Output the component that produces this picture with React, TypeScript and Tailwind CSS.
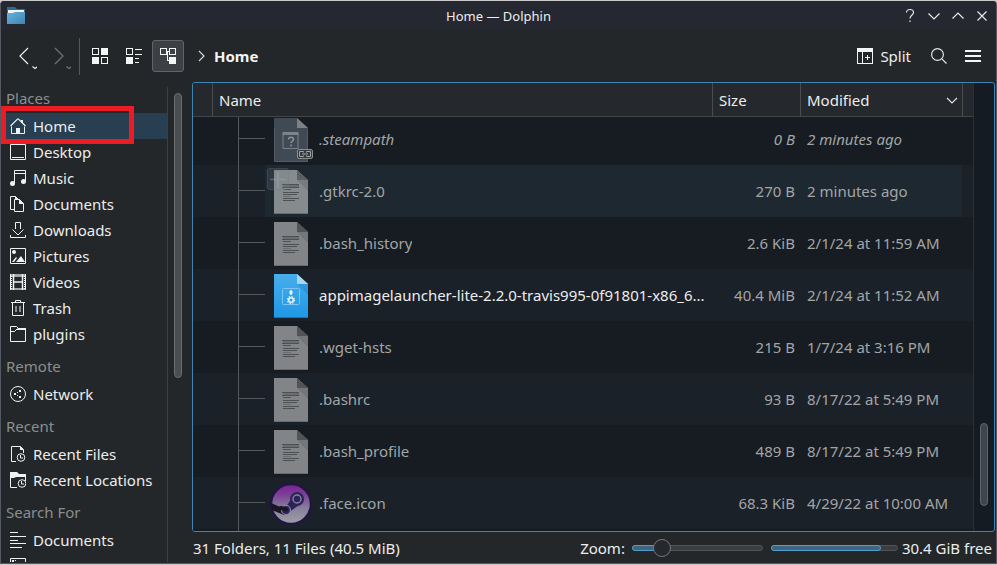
import React from "react";

type IconProps = { children: React.ReactNode };

const PlaceIcon = ({ children }: IconProps) => (
  <svg
    width="16"
    height="16"
    viewBox="0 0 16 16"
    fill="none"
    stroke="#f0f1f2"
    strokeWidth="1"
    className="shrink-0"
    aria-hidden="true"
  >
    {children}
  </svg>
);

const icons: Record<string, React.ReactNode> = {
  home: (
    <>
      <path d="M1.5 8.5v7h13v-7" />
      <path d="M0.5 8L7.5 1h1L15.5 8" strokeWidth="1.2" />
      <path d="M11 2h2v4l-2-2zM6 10h4v6H6z" fill="#f0f1f2" stroke="none" />
    </>
  ),
  desktop: (
    <>
      <path d="M0.5 0.5h15v15H0.5z" />
      <path d="M2 13.5h12" />
    </>
  ),
  music: (
    <>
      <path d="M4.5 13V0.5h11V11M5 3.5h10" />
      <circle cx="2.5" cy="13.5" r="2.5" fill="#f0f1f2" stroke="none" />
      <circle cx="13.5" cy="11.5" r="2.5" fill="#f0f1f2" stroke="none" />
    </>
  ),
  documents: (
    <>
      <path d="M4 13.5H0.5V0.5h5l3 3" />
      <path d="M4.5 3.5h5l4 4v8h-9z" />
      <path d="M9 3l5 5H9z" fill="#f0f1f2" stroke="none" />
      <path d="M5 0l4 3.5H5z" fill="#f0f1f2" stroke="none" />
    </>
  ),
  downloads: (
    <>
      <path d="M5.5 7V0.5h5V7" />
      <path d="M2.5 7.5L8 13l5.5-5.5" />
      <path d="M0.5 13v2.5h15V13" />
    </>
  ),
  pictures: (
    <>
      <path d="M0.5 0.5h15v15H0.5z" />
      <circle cx="4" cy="4" r="2" fill="#f0f1f2" stroke="none" />
      <path d="M2 14l4-5 1 1-3 4zM6 14l5-6 4 6z" fill="#f0f1f2" stroke="none" />
    </>
  ),
  videos: (
    <>
      <path d="M0 0h16v3H0zM0 14h16v2H0z" fill="#a5a7a9" stroke="none" />
      <path d="M3.5 0v16M12.5 0v16M3 8h10" strokeWidth="1.5" />
      <path d="M0.5 0v16M15.5 0v16" />
      <path d="M1.5 2v13M14.5 2v13" strokeDasharray="1 1" />
    </>
  ),
  trash: (
    <>
      <path d="M1 2.5h14M5.5 2V0.5h5V2M2.5 3v12.500h11V3" />
      <path d="M6 6v6M10 6v6" />
    </>
  ),
  folder: (
    <>
      <path d="M0.5 0.5h6l2 2h7v13H0.5zM0.5 5.5h4L7 3" />
      <path d="M8 2h8v2H6z" fill="#f0f1f2" stroke="none" />
    </>
  ),
  network: (
    <>
      <circle cx="8" cy="8" r="7.5" />
      <path d="M4 7h2v2H4zM9 4h2v2H9zM9 10h2v2H9zM7 6h1v1H7zM7 9h1v1H7z" fill="#f0f1f2" stroke="none" />
    </>
  ),
  recentFiles: (
    <>
      <path d="M6 15.5H1.5V0.5h9l3 3V7" />
      <path d="M10 0l4 4h-4z" fill="#f0f1f2" stroke="none" />
      <circle cx="11" cy="11.5" r="3.8" />
      <path d="M10.5 9v3H13" />
    </>
  ),
  recentLocations: (
    <>
      <path d="M0.5 3v12.500H7M15.5 4v5" />
      <path d="M0 0h7l2 2h7v3H6L4 6H0z" fill="#f0f1f2" stroke="none" />
      <circle cx="12" cy="11.5" r="3.8" />
      <path d="M11.5 9v3H14" />
    </>
  ),
  text: <path d="M0 0.5h8M0 4.5h16M0 8.5h8M0 11.5h16M0 15.5h12" />,
  images: (
    <>
      <path d="M0.5 0.5h15v15H0.5z" />
      <path d="M2 2h2v2H2zM5 2h1v1H5z" fill="#f0f1f2" stroke="none" />
    </>
  ),
};

type Place = { label: string; icon: string; active?: boolean; iconOnly?: boolean };

const sections: { title: string; items: Place[] }[] = [
  {
    title: "Places",
    items: [
      { label: "Home", icon: "home", active: true },
      { label: "Desktop", icon: "desktop" },
      { label: "Music", icon: "music" },
      { label: "Documents", icon: "documents" },
      { label: "Downloads", icon: "downloads" },
      { label: "Pictures", icon: "pictures" },
      { label: "Videos", icon: "videos" },
      { label: "Trash", icon: "trash" },
      { label: "plugins", icon: "folder" },
    ],
  },
  { title: "Remote", items: [{ label: "Network", icon: "network" }] },
  {
    title: "Recent",
    items: [
      { label: "Recent Files", icon: "recentFiles" },
      { label: "Recent Locations", icon: "recentLocations" },
    ],
  },
  {
    title: "Search For",
    items: [
      { label: "Documents", icon: "text" },
      { label: "Images", icon: "images", iconOnly: true },
    ],
  },
];

type Kind = "unknown" | "text" | "app" | "steam";
type FileRow = {
  name: string;
  size: string;
  modified: string;
  kind: Kind;
  hover?: boolean;
  link?: boolean;
  bright?: boolean;
};

const files: FileRow[] = [
  { name: ".steampath", size: "0 B", modified: "2 minutes ago", kind: "unknown", link: true },
  { name: ".gtkrc-2.0", size: "270 B", modified: "2 minutes ago", kind: "text", hover: true },
  { name: ".bash_history", size: "2.6 KiB", modified: "2/1/24 at 11:59 AM", kind: "text" },
  {
    name: "appimagelauncher-lite-2.2.0-travis995-0f91801-x86_6...",
    size: "40.4 MiB",
    modified: "2/1/24 at 11:52 AM",
    kind: "app",
    bright: true,
  },
  { name: ".wget-hsts", size: "215 B", modified: "1/7/24 at 3:16 PM", kind: "text" },
  { name: ".bashrc", size: "93 B", modified: "8/17/22 at 5:49 PM", kind: "text" },
  { name: ".bash_profile", size: "489 B", modified: "8/17/22 at 5:49 PM", kind: "text" },
  { name: ".face.icon", size: "68.3 KiB", modified: "4/29/22 at 10:00 AM", kind: "steam" },
];

function FileIcon({ kind, hover }: { kind: Kind; hover?: boolean }) {
  return (
    <svg width="48" height="44" viewBox="0 0 48 44" className="shrink-0 overflow-visible" aria-hidden="true">
      <defs>
        <linearGradient id="appFill" x1="0" y1="0" x2="0" y2="1">
          <stop offset="0" stopColor="#48aeec" />
          <stop offset="1" stopColor="#1e98e6" />
        </linearGradient>
        <linearGradient id="steamFill" x1="0" y1="0" x2="0" y2="1">
          <stop offset="0" stopColor="#7a2290" />
          <stop offset="0.25" stopColor="#7c3c98" />
          <stop offset="0.6" stopColor="#86809a" />
          <stop offset="1" stopColor="#a0a0a6" />
        </linearGradient>
      </defs>
      {kind === "text" && (
        <>
          <path d="M7 0h23l11 10v34H7z" fill={hover ? "#868b8e" : "#828488"} />
          <path d="M30 10h11v11z" fill="#000" opacity="0.1" />
          <path d="M30 0l11 10H30z" fill={hover ? "#596167" : "#515457"} />
          <path d="M7 43.5h34" stroke="#696b6e" />
          <path d="M16 14h16v3H16z" fill="#6b6e71" />
          <path
            d="M15 14.5h17M15 17.5h17M16 19.5h8M16 22.5h16M16 24.5h14M16 28.5h16M16 30.5h12"
            stroke="#4e5154"
          />
          <path d="M16 26.5h8" stroke="#6b6e71" />
          {hover && (
            <>
              <rect x="0.5" y="-1.5" width="21" height="21" rx="2" fill="#7b858c" fillOpacity="0.18" stroke="#737c83" strokeOpacity="0.3" />
              <path d="M3 9.5h16M11 2v16" stroke="#a8aeb2" strokeWidth="2" opacity="0.3" />
            </>
          )}
        </>
      )}
      {kind === "unknown" && (
        <>
          <path d="M7 0h23l11 10v34H7z" fill="#404a55" />
          <path d="M30 0l11 10H30z" fill="#7c8187" />
          <path d="M7.5 10v33.500h33V11" fill="none" stroke="#525b64" />
          <path d="M16 15.5h15v15H16z" fill="none" stroke="#79818a" />
          <path d="M15.5 14h16v3h-16z" fill="#7b838b" />
          <path
            d="M21.5 21.5c0-3 5-3 5 0 0 1.800-2.500 1.800-2.500 3.500M24 26.5v2"
            fill="none"
            stroke="#8a9097"
            strokeWidth="1.5"
          />
          <rect x="30.5" y="31.5" width="15" height="9" rx="1.5" fill="#343b40" stroke="#8b8f92" />
          <path d="M36.5 34.5v-1h-4v5h4v-1M39.5 34.5v-1h4v5h-4v-1M35 36h6" fill="none" stroke="#a2a5a7" />
        </>
      )}
      {kind === "app" && (
        <>
          <path d="M7 0h23l11 10v34H7z" fill="url(#appFill)" />
          <path d="M30 10h11v11z" fill="#1b78b8" opacity="0.35" />
          <path d="M30 0l11 10H30z" fill="#a5d8f7" />
          <path d="M7 43.5h34" stroke="#1a73ab" />
          <rect x="15.5" y="14.5" width="17" height="16" rx="1" fill="none" stroke="#7cc5f2" />
          <path d="M22.5 17.5l1.500-2 1.500 2v2l-1.500 2-1.500-2z" fill="#e8f5fd" />
          <circle cx="24" cy="26" r="2.3" fill="none" stroke="#e8f5fd" strokeWidth="1.5" />
          <circle cx="24" cy="26" r="3.5" fill="none" stroke="#e8f5fd" strokeWidth="1.2" strokeDasharray="1.4 1.35" />
        </>
      )}
      {kind === "steam" && (
        <>
          <circle cx="24" cy="22" r="20" fill="url(#steamFill)" stroke="#211640" strokeWidth="2.5" />
          <path d="M4 21l14 6-1 6-12-5z" fill="#191522" />
          <path d="M18 26l7-10 7 7-11 8z" fill="#2b2459" />
          <circle cx="30" cy="17" r="7" fill="#2b2459" />
          <circle cx="30" cy="17" r="4" fill="#2b2459" stroke="#8d7ba0" strokeWidth="1.5" />
          <circle cx="19" cy="28" r="4.5" fill="#2b2459" stroke="#9088a5" strokeWidth="1.2" />
          <path d="M14 26l5 1.500" stroke="#191522" strokeWidth="4" strokeLinecap="round" />
        </>
      )}
    </svg>
  );
}

const ToolGlyph = ({ children }: IconProps) => (
  <svg width="16" height="16" viewBox="0 0 16 16" fill="none" stroke="#f4f5f5" aria-hidden="true" shapeRendering="crispEdges">
    {children}
  </svg>
);

const Chevron = ({ d, label }: { d: string; label: string }) => (
  <button aria-label={label} className="flex size-4 items-center justify-center">
    <svg width="16" height="16" viewBox="0 0 16 16" fill="none" stroke="#e6e7e8" strokeWidth="1.2" aria-hidden="true">
      <path d={d} />
    </svg>
  </button>
);

function TitleBar() {
  return (
    <header className="grid h-[29px] shrink-0 grid-cols-[1fr_auto_1fr] items-center bg-[#252830] px-[6px]">
      <svg width="18" height="18" viewBox="1 1 18 18" aria-hidden="true">
        <defs>
          <linearGradient id="winFolder" x1="0" y1="0" x2="1" y2="1">
            <stop offset="0" stopColor="#68b2dd" />
            <stop offset="1" stopColor="#3d85b3" />
          </linearGradient>
        </defs>
        <path d="M1 1h8l2 2h8v5H1z" fill="#2d6b93" />
        <path d="M2 4h16v3H2z" fill="#f0f4f6" />
        <path d="M1 7h6l2-1h10v12H1z" fill="url(#winFolder)" />
      </svg>
      <h1 className="text-[13px] leading-5 text-[#eceded]">Home — Dolphin</h1>
      <div className="flex items-center justify-end gap-2">
        <Chevron label="Help" d="M4.5 4.5c0-4 7-4 7 0 0 2.500-3.500 2.500-3.500 6M8 12.5v1.500" />
        <Chevron label="Minimize" d="M2.5 5.5L8 11l5.500-5.500" />
        <Chevron label="Maximize" d="M2.5 10.5L8 5l5.500 5.500" />
        <Chevron label="Close" d="M3.5 3.5l9 9M12.5 3.5l-9 9" />
      </div>
    </header>
  );
}

const NavButton = ({ d, label, muted }: { d: string; label: string; muted?: boolean }) => (
  <button aria-label={label} className={muted ? "text-[#707376]" : "text-[#eff0f1]"}>
    <svg width="24" height="28" viewBox="0 0 24 28" fill="none" stroke="currentColor" strokeWidth="1.2" aria-hidden="true">
      <path d={d} />
      <path d="M19.5 24.5l2.500 2 2.500-2" />
    </svg>
  </button>
);

function Toolbar() {
  return (
    <div className="flex h-[52px] shrink-0 items-center pr-[15px] pl-3">
      <div className="flex gap-[10px]">
        <NavButton label="Back" d="M15 6L7 14l8 8" />
        <NavButton label="Forward" muted d="M8 6l8 8-8 8" />
      </div>
      <div className="ml-2 h-[37px] w-px bg-[#55585b]" />
      <div className="ml-1 flex items-center gap-[2px]">
        <button aria-label="Icons" className="flex size-8 items-center justify-center">
          <ToolGlyph>
            <path d="M0.5 0.5h6v6h-6zM9.5 9.5h6v6h-6z" />
            <path d="M9 0h7v7H9zM0 9h7v7H0z" fill="#f4f5f5" stroke="none" />
          </ToolGlyph>
        </button>
        <button aria-label="Compact" className="flex size-8 items-center justify-center">
          <ToolGlyph>
            <path d="M0.5 0.5h6v6h-6zM9 1.5h7M9 6.5h7M9 10.5h4M9 14.5h4" />
            <path d="M0 9h7v7H0z" fill="#f4f5f5" stroke="none" />
          </ToolGlyph>
        </button>
        <button
          aria-label="Details"
          aria-pressed="true"
          className="flex size-8 items-center justify-center rounded-[3px] border border-[#626568] bg-[#3c3f43]"
        >
          <ToolGlyph>
            <path d="M0.5 0.5h6v6h-6zM9.5 0.5h6v6h-6zM7 3.5h2M7.5 3v9.500H9" />
            <path d="M9 9h7v7H9z" fill="#f4f5f5" stroke="none" />
          </ToolGlyph>
        </button>
      </div>
      <nav aria-label="Location" className="ml-3 flex items-center gap-[7px]">
        <svg width="11" height="12" viewBox="0 0 11 12" fill="none" stroke="#d5d6d7" strokeWidth="1.2" aria-hidden="true">
          <path d="M3 1l5 5-5 5" />
        </svg>
        <a href="#home" className="font-bold text-[#f2f3f3]">
          Home
        </a>
      </nav>
      <div className="ml-auto flex items-center">
        <button className="flex items-center gap-[7px]">
          <ToolGlyph>
            <path d="M0.5 0.5h15v15H0.5zM5.5 4v12M10.5 7v5M8 9.5h5" />
            <path d="M0 0h16v4H0z" fill="#f4f5f5" stroke="none" />
          </ToolGlyph>
          Split
        </button>
        <button aria-label="Search" className="ml-5">
          <svg width="16" height="16" viewBox="0 0 16 16" fill="none" stroke="#e3e4e4" strokeWidth="1.2" aria-hidden="true">
            <circle cx="6.5" cy="6.5" r="5.9" />
            <path d="M10.8 10.8l4.700 4.700" />
          </svg>
        </button>
        <button aria-label="Menu" className="ml-[18px]">
          <svg width="16" height="16" viewBox="0 0 16 16" stroke="#f4f5f5" strokeWidth="2" aria-hidden="true">
            <path d="M0 3h16M0 8h16M0 13h16" />
          </svg>
        </button>
      </div>
    </div>
  );
}

function Sidebar() {
  return (
    <aside className="flex min-h-0 w-[191px] shrink-0 gap-[6px] pt-[5px] pb-px">
      <div className="w-[167px] overflow-hidden border-r border-[#3c3f42]">
        {sections.map((section, i) => (
          <section key={section.title} className={i === 0 ? "pt-px" : "pt-[9px]"}>
            <h2 className="pb-[5px] pl-[5px] leading-5 text-[#8b8d8f]">{section.title}</h2>
            <ul>
              {section.items.map((item) => (
                <li key={item.label} className="relative">
                  <a
                    href="#place"
                    aria-label={item.label}
                    className={
                      "flex h-[26px] items-center gap-[7px] pl-[9px] " + (item.active ? "bg-[#273f50]" : "")
                    }
                  >
                    <PlaceIcon>{icons[item.icon]}</PlaceIcon>
                    {!item.iconOnly && item.label}
                  </a>
                  {item.active && (
                    <div className="pointer-events-none absolute -top-[7px] left-0 z-10 h-[38px] w-[133px] border-5 border-[#ed1c24]" />
                  )}
                </li>
              ))}
            </ul>
          </section>
        ))}
      </div>
      <div className="mt-[6px] h-[285px] w-[8px] rounded-full border border-[#6b6d6f] bg-[#4b4d50]" />
    </aside>
  );
}

const headCell = "h-[34px] border-b border-[#424548] bg-[#25282c] text-left font-normal";
const divided = " border-l border-l-[#4a4d50] pl-[6px]";

function FileTable() {
  return (
    <div className="flex min-h-0 flex-1 overflow-hidden rounded-[3px] border border-[#3d86b4] bg-[#151b22]">
      <div className="min-w-0 flex-1 overflow-hidden">
        <table className="w-full table-fixed border-separate border-spacing-0">
          <colgroup>
            <col className="w-[19px]" />
            <col className="w-[26px]" />
            <col className="w-[27px]" />
            <col />
            <col className="w-[88px]" />
            <col className="w-[162px]" />
            <col className="w-[11px]" />
          </colgroup>
          <thead>
            <tr>
              <th className={headCell} />
              <th colSpan={3} className={headCell + divided}>Name</th>
              <th className={headCell + divided}>Size</th>
              <th className={headCell + divided}>
                <div className="flex items-center justify-between pr-1">
                  Modified
                  <svg width="12" height="8" viewBox="0 0 12 8" fill="none" stroke="#dfe0e1" strokeWidth="1.2" aria-hidden="true">
                    <path d="M1 2l5 5 5-5" />
                  </svg>
                </div>
              </th>
              <th className={headCell + " border-l border-l-[#4a4d50]"} />
            </tr>
          </thead>
          <tbody>
            {files.map((f, i) => {
              const tone = f.bright ? "text-[#eceded]" : "text-[#a2a5a7]";
              const cell = "pb-[3px] align-bottom " + (f.hover ? "bg-[#1e2831] " : "");
              return (
                <tr
                  key={f.name}
                  className={
                    (i === 0 ? "h-[48px] " : "h-[52px] ") +
                    (i % 2 ? "bg-[#1b2129] " : "bg-[#161c22] ") +
                    (f.link ? "italic" : "")
                  }
                >
                  <td />
                  <td />
                  <td className="border-l border-[#55585c] pb-[3px] align-bottom">
                    <div className="h-11">
                      <div className="h-[21px] border-b border-[#55585c]" />
                    </div>
                  </td>
                  <td className={cell}>
                    <div className={"flex h-11 items-center gap-1 pr-1 pl-[2px] " + tone}>
                      <FileIcon kind={f.kind} hover={f.hover} />
                      <span className="truncate pb-[2px]">{f.name}</span>
                    </div>
                  </td>
                  <td className={cell}>
                    <div className="flex h-11 items-center justify-end pr-[5px] pb-[2px] text-[#a2a5a7]">{f.size}</div>
                  </td>
                  <td className={cell}>
                    <div className="flex h-11 items-center pb-[2px] pl-[7px] whitespace-nowrap text-[#a2a5a7]">{f.modified}</div>
                  </td>
                  <td />
                </tr>
              );
            })}
            <tr className="h-[52px] bg-[#161c22]">
              <td />
              <td />
              <td className="border-l border-[#55585c]" />
              <td colSpan={4} />
            </tr>
          </tbody>
        </table>
      </div>
      <div className="flex w-[21px] flex-col items-center justify-end border-l border-[#2b3036] pb-[25px]">
        <div className="h-[83px] w-[8px] rounded-full border border-[#5d666d] bg-[#3d464e]" />
      </div>
    </div>
  );
}

function StatusBar() {
  return (
    <footer className="flex h-[31px] shrink-0 items-center pt-px pr-[3px] pl-px">
      <span className="whitespace-nowrap">31 Folders, 11 Files (40.5 MiB)</span>
      <label htmlFor="zoom" className="ml-auto">
        Zoom:
      </label>
      <div className="ml-[7px] grid w-[131px] items-center">
        <div className="col-start-1 row-start-1 h-[6px] rounded-full border border-[#505356] bg-[#3b3e41]">
          <div className="-mt-px -ml-px h-[6px] w-[30px] rounded-full border border-[#4f9fce] bg-[#406580]" />
        </div>
        <input
          id="zoom"
          type="range"
          min="0"
          max="100"
          defaultValue="19"
          className="col-start-1 row-start-1 h-[18px] w-full appearance-none bg-transparent [&::-webkit-slider-thumb]:size-[18px] [&::-webkit-slider-thumb]:appearance-none [&::-webkit-slider-thumb]:rounded-full [&::-webkit-slider-thumb]:border [&::-webkit-slider-thumb]:border-[#73767a] [&::-webkit-slider-thumb]:bg-[#25282c]"
        />
      </div>
      <div
        role="progressbar"
        aria-label="Disk usage"
        aria-valuenow={87}
        className="ml-2 h-[6px] w-[127px] rounded-full border border-[#505356] bg-[#3b3e41]"
      >
        <div className="-mt-px -ml-px h-[6px] w-[110px] rounded-full border border-[#4f9fce] bg-[#406580]" />
      </div>
      <span className="ml-1 whitespace-nowrap">30.4 GiB free</span>
    </footer>
  );
}

export default function App() {
  return (
    <div className="h-screen overflow-hidden bg-[#c9cac9] pt-px pb-px font-['Noto_Sans',sans-serif] text-[15px] leading-5 text-[#eceded]">
      <div className="flex h-full flex-col overflow-hidden rounded-t-[4px] border-x border-b border-[#555964] bg-[#23272a]">
        <TitleBar />
        <Toolbar />
        <div className="flex min-h-0 flex-1">
          <Sidebar />
          <main className="flex min-w-0 flex-1 flex-col pr-px">
            <FileTable />
            <StatusBar />
          </main>
        </div>
      </div>
    </div>
  );
}
